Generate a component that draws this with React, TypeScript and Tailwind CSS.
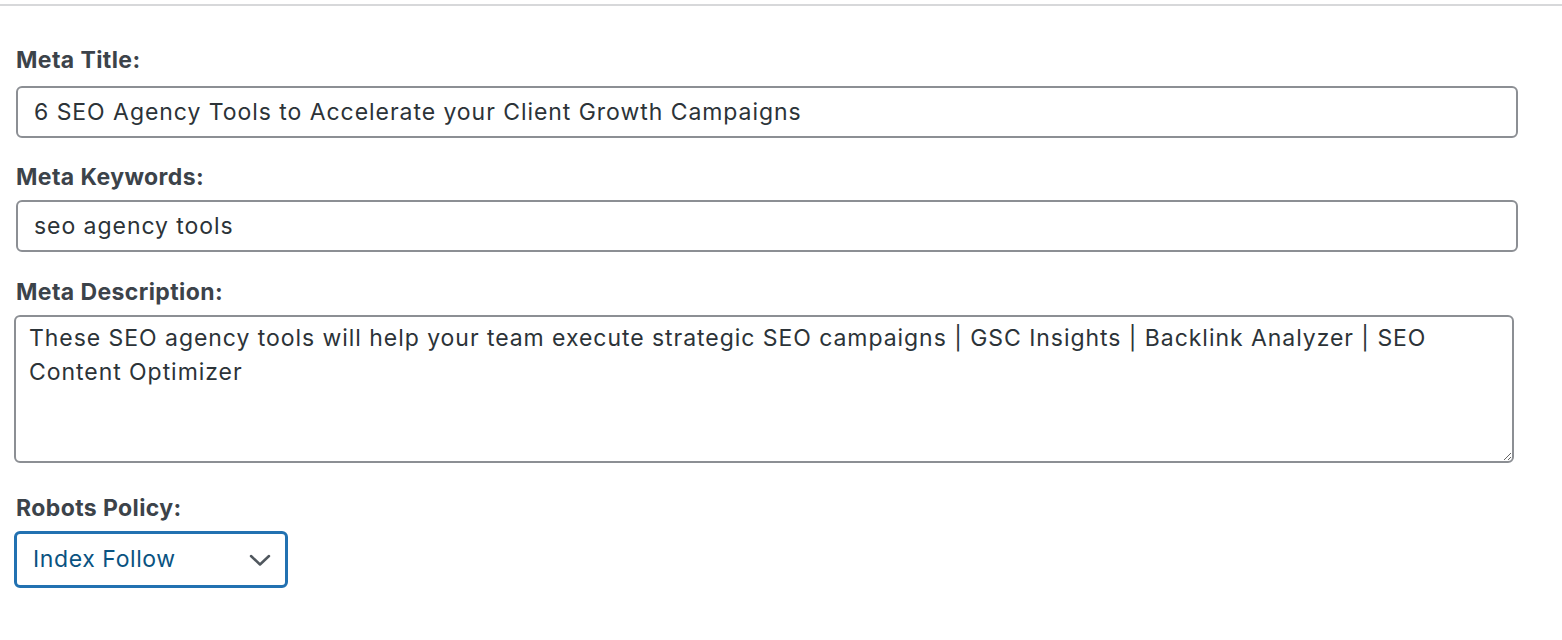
const labelCls =
  "block ml-[2px] text-[23px] leading-[26px] font-bold tracking-[0.4px] text-[#3c434a]";
const inputCls =
  "block h-[52px] w-[1502px] ml-[2px] rounded-[6px] border-2 border-[#8c8f94] bg-white pl-[16px] text-[23px] tracking-[0.95px] text-[#2c3338] outline-none";

function Chevron() {
  return (
    <svg
      className="pointer-events-none absolute right-[17px] top-[23px]"
      width="22"
      height="13"
      viewBox="0 0 22 13"
      fill="none"
    >
      <path d="M2 2 L11 10.5 L20 2" stroke="#50575e" strokeWidth="2.5" strokeLinecap="round" strokeLinejoin="round" />
    </svg>
  );
}

export default function App() {
  return (
    <div className="min-h-screen w-full bg-white font-['Inter',sans-serif] antialiased">
      <div className="mt-[4px] h-[2px] w-full bg-[#d7d8da]" />

      <div className="pl-[14px] pt-[41px]">
        {/* Meta title */}
        <label className={labelCls + " mb-[13px]"}>Meta Title:</label>
        <input
          className={inputCls}
          defaultValue="6 SEO Agency Tools to Accelerate your Client Growth Campaigns"
        />

        {/* Meta keywords */}
        <label className={labelCls + " mt-[26px] mb-[10px]"}>Meta Keywords:</label>
        <input className={inputCls} defaultValue="seo agency tools" />

        {/* Meta description */}
        <label className={labelCls + " mt-[27px] mb-[10px]"}>Meta Description:</label>
        <textarea
          className="block h-[148px] w-[1500px] rounded-[6px] border-2 border-[#8c8f94] bg-white pl-[13px] pr-[50px] pt-[4px] text-[23px] leading-[34px] tracking-[0.95px] text-[#2c3338] outline-none"
          defaultValue="These SEO agency tools will help your team execute strategic SEO campaigns | GSC Insights | Backlink Analyzer | SEO Content Optimizer"
        />

        {/* Robots policy */}
        <label className={labelCls + " mt-[32px] mb-[10px]"}>Robots Policy:</label>
        <div className="relative w-[274px]">
          <select
            className="block h-[57px] w-[274px] appearance-none rounded-[6px] border-[3px] border-[#2271b1] bg-white pl-[16px] text-[23px] tracking-[0.6px] text-[#0a5381] outline-none"
            defaultValue="index-follow"
          >
            <option value="index-follow">Index Follow</option>
            <option value="noindex-follow">NoIndex Follow</option>
            <option value="index-nofollow">Index NoFollow</option>
            <option value="noindex-nofollow">NoIndex NoFollow</option>
          </select>
          <Chevron />
        </div>
      </div>
    </div>
  );
}
